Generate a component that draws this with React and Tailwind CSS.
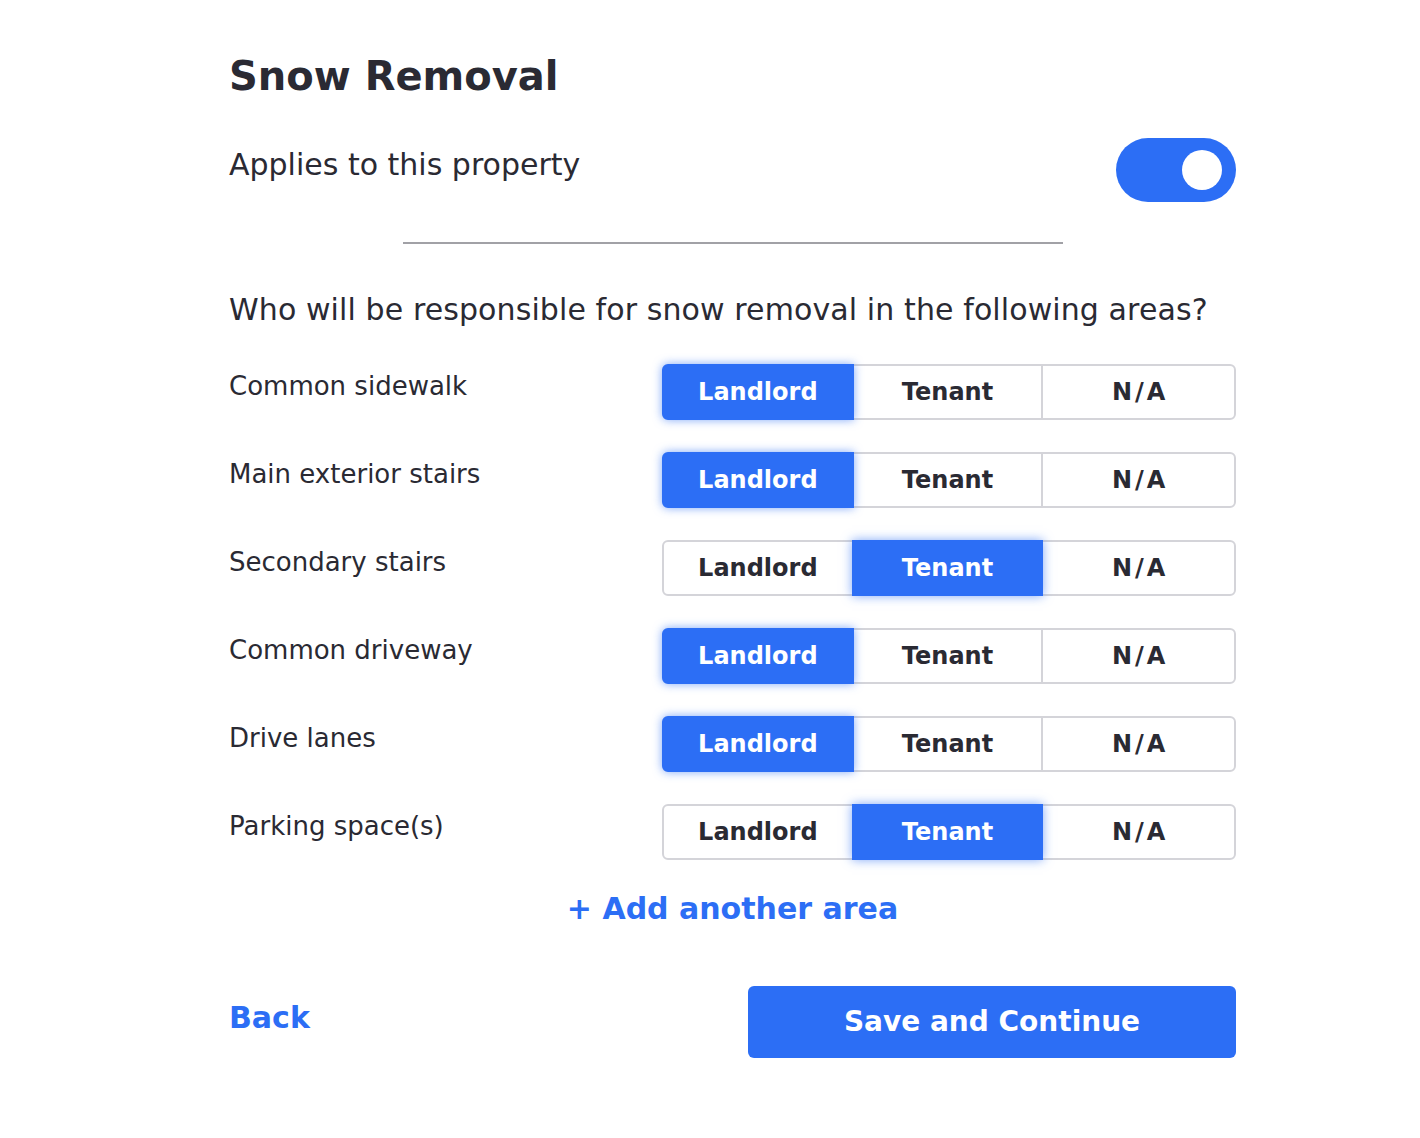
import { useState } from "react";

const AREAS = [
  { name: "Common sidewalk", pick: "Landlord" },
  { name: "Main exterior stairs", pick: "Landlord" },
  { name: "Secondary stairs", pick: "Tenant" },
  { name: "Common driveway", pick: "Landlord" },
  { name: "Drive lanes", pick: "Landlord" },
  { name: "Parking space(s)", pick: "Tenant" },
];

const OPTIONS = ["Landlord", "Tenant", "N/A"];

function Segmented({ value, onChange }) {
  return (
    <div className="flex w-[574px] h-[56px] shrink-0">
      {OPTIONS.map((opt, i) => {
        const active = opt === value;
        return (
          <button
            key={opt}
            onClick={() => onChange(opt)}
            className={[
              "flex-1 flex items-center justify-center border-2 text-[24px] font-bold",
              opt === "N/A" ? "tracking-[3px] pl-[3px]" : "",
              i > 0 ? "-ml-[2px]" : "",
              i === 0 ? "rounded-l-[6px]" : "",
              i === OPTIONS.length - 1 ? "rounded-r-[6px]" : "",
              active
                ? "relative z-10 bg-[#2c6ef5] border-[#2c6ef5] text-white shadow-[0_0_10px_rgba(44,110,245,0.6)]"
                : "bg-white border-[#d4d4d9] text-[#2a2a33]",
            ].join(" ")}
          >
            {opt}
          </button>
        );
      })}
    </div>
  );
}

export default function App() {
  const [applies, setApplies] = useState(true);
  const [areas, setAreas] = useState(AREAS);

  const setPick = (idx, pick) =>
    setAreas((prev) => prev.map((a, i) => (i === idx ? { ...a, pick } : a)));

  return (
    <div
      className="min-h-[1138px] bg-white text-[#2a2a33]"
      style={{ fontFamily: '"DejaVu Sans", Verdana, sans-serif' }}
    >
      <div className="ml-[229px] w-[1007px] pt-[53px] flex flex-col">
        <h1 className="text-[40px] font-bold leading-[1.164]">Snow Removal</h1>

        <div className="mt-[48px] flex items-start justify-between">
          <p className="text-[30px] leading-[1.164]">Applies to this property</p>
          <button
            onClick={() => setApplies(!applies)}
            className={`-mt-[10px] w-[120px] h-[64px] rounded-full flex items-center px-[14px] ${
              applies ? "bg-[#2c6ef5] justify-end" : "bg-gray-300 justify-start"
            }`}
            aria-label="Applies to this property"
          >
            <span className="w-[40px] h-[40px] rounded-full bg-white" />
          </button>
        </div>

        <div className="mt-[40px] mx-auto w-[660px] h-[2px] bg-[#a1a1a6]" />

        <p className="mt-[49px] text-[30px] leading-[1.164] tracking-[0.1px]">
          Who will be responsible for snow removal in the following areas?
        </p>

        <div className="mt-[37px] flex flex-col gap-[32px]">
          {areas.map((a, i) => (
            <div key={a.name} className="flex items-start justify-between">
              <span className="pt-[7px] text-[26px] leading-[1.164]">{a.name}</span>
              <Segmented value={a.pick} onChange={(v) => setPick(i, v)} />
            </div>
          ))}
        </div>

        <button className="mt-[32px] self-center text-[30px] font-bold text-[#2c6ef5] leading-[1.164]">
          + Add another area
        </button>

        <div className="mt-[59px] flex items-center justify-between">
          <button className="text-[30px] font-bold text-[#2c6ef5] leading-[1.164] -mt-[8px]">
            Back
          </button>
          <button className="w-[488px] h-[72px] rounded-[6px] bg-[#2c6ef5] text-white text-[28px] font-bold">
            Save and Continue
          </button>
        </div>
      </div>
    </div>
  );
}
